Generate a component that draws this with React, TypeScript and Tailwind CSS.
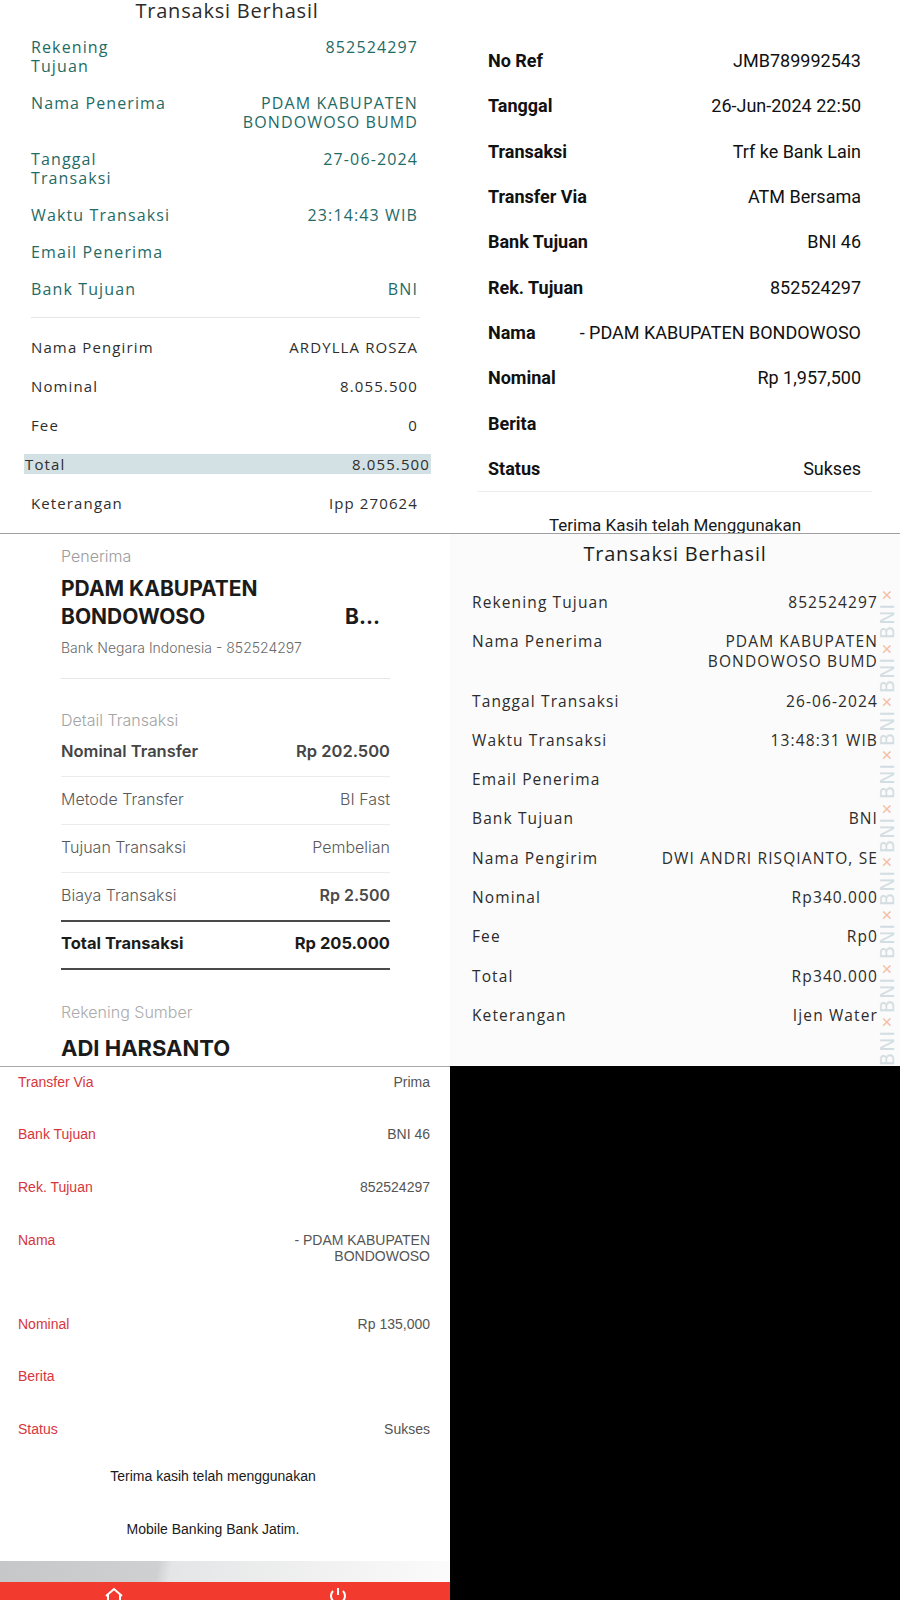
import React from "react";

type Row = { l: React.ReactNode; v?: React.ReactNode };

function Panel1() {
  const top: Row[] = [
    { l: <>Rekening<br />Tujuan</>, v: "852524297" },
    { l: "Nama Penerima", v: <>PDAM KABUPATEN<br />BONDOWOSO BUMD</> },
    { l: <>Tanggal<br />Transaksi</>, v: "27-06-2024" },
    { l: "Waktu Transaksi", v: "23:14:43 WIB" },
    { l: "Email Penerima", v: "" },
    { l: "Bank Tujuan", v: "BNI" },
  ];
  return (
    <div className="w-[450px] h-[533px] bg-white overflow-hidden font-['Open_Sans',sans-serif] tracking-[0.07em]">
      <div className="h-[20px] leading-[22px] text-[20px] text-center text-[#2b2b2b] tracking-[0.04em] pl-[4px]">Transaksi Berhasil</div>
      <div className="mt-[18px] px-[31px] pr-[32px] flex flex-col gap-[18px] text-[16px] leading-[19px] font-medium text-[#1f6b66]">
        {top.map((r, i) => (
          <div key={i} className="flex justify-between">
            <div>{r.l}</div>
            <div className="text-right">{r.v}</div>
          </div>
        ))}
      </div>
      <div className="mx-[31px] mr-[30px] mt-[18px] h-px bg-[#e2e6e7]" />
      <div className="mt-[20px] px-[31px] pr-[32px] flex flex-col gap-[20px] text-[15px] leading-[19px] text-[#2e2e2e]">
        <div className="flex justify-between"><span>Nama Pengirim</span><span>ARDYLLA ROSZA</span></div>
        <div className="flex justify-between"><span>Nominal</span><span>8.055.500</span></div>
        <div className="flex justify-between"><span>Fee</span><span>0</span></div>
      </div>
      <div className="mt-[19px] ml-[24px] w-[407px] h-[20px] bg-[#d3e0e4] flex justify-between items-center px-[1px] text-[15px] text-[#2e2e2e]">
        <span>Total</span><span>8.055.500</span>
      </div>
      <div className="mt-[20px] px-[31px] pr-[32px] flex justify-between text-[15px] leading-[19px] text-[#2e2e2e]">
        <span>Keterangan</span><span>Ipp 270624</span>
      </div>
    </div>
  );
}

function Panel2() {
  const rows: [string, string][] = [
    ["No Ref", "JMB789992543"],
    ["Tanggal", "26-Jun-2024 22:50"],
    ["Transaksi", "Trf ke Bank Lain"],
    ["Transfer Via", "ATM Bersama"],
    ["Bank Tujuan", "BNI 46"],
    ["Rek. Tujuan", "852524297"],
    ["Nama", "- PDAM KABUPATEN BONDOWOSO"],
    ["Nominal", "Rp 1,957,500"],
    ["Berita", ""],
    ["Status", "Sukses"],
  ];
  return (
    <div className="w-[450px] h-[533px] bg-white overflow-hidden font-['Roboto',sans-serif] text-[#111]">
      <div className="pt-[38px] pl-[38px] pr-[39px]">
        {rows.map(([l, v]) => (
          <div key={l} className="h-[45.3px] flex items-center justify-between text-[18px]">
            <span className="font-bold">{l}</span>
            <span>{v}</span>
          </div>
        ))}
      </div>
      <div className="ml-[28px] w-[394px] h-px bg-[#ececec]" />
      <div className="mt-[23px] text-center text-[17px] leading-[20px] text-[#1a1a1a]">Terima Kasih telah Menggunakan</div>
    </div>
  );
}

function Panel3() {
  const rows: { l: string; v: string }[] = [
    { l: "Metode Transfer", v: "BI Fast" },
    { l: "Tujuan Transaksi", v: "Pembelian" },
  ];
  return (
    <div className="w-[450px] h-[532px] bg-white overflow-hidden font-['Inter',sans-serif] pl-[61px] pr-[60px]">
      <div className="mt-[12px] text-[16px] leading-[20px] text-[#9c9c9c] font-light">Penerima</div>
      <div className="mt-[9px] text-[21px] leading-[28px] font-bold text-[#1b1b1b] pr-[10px]">
        <div>PDAM KABUPATEN</div>
        <div className="flex justify-between"><span>BONDOWOSO</span><span>B...</span></div>
      </div>
      <div className="mt-[7px] text-[14px] leading-[20px] text-[#6a6a6a] font-light">Bank Negara Indonesia - 852524297</div>
      <div className="mt-[20px] h-px bg-[#e6e6e6]" />
      <div className="mt-[31px] text-[16px] leading-[20px] text-[#a3a3a3] font-light">Detail Transaksi</div>
      <div className="pt-[11px] pb-[15px] leading-[20px] flex justify-between text-[16.5px] font-semibold text-[#454545] border-b border-[#ececec]">
        <span>Nominal Transfer</span><span>Rp 202.500</span>
      </div>
      {rows.map((r) => (
        <div key={r.l} className="pt-[12px] pb-[15px] leading-[20px] flex justify-between text-[16px] text-[#5a5a5a] font-light border-b border-[#ececec]">
          <span>{r.l}</span><span>{r.v}</span>
        </div>
      ))}
      <div className="pt-[12px] pb-[15px] leading-[20px] flex justify-between text-[16px] text-[#5a5a5a] font-light border-b-2 border-[#4a4a4a]">
        <span>Biaya Transaksi</span><span className="font-semibold text-[#4a4a4a]">Rp 2.500</span>
      </div>
      <div className="pt-[11px] pb-[15px] leading-[20px] flex justify-between text-[16.5px] font-bold text-[#1b1b1b] border-b-2 border-[#4a4a4a]">
        <span>Total Transaksi</span><span>Rp 205.000</span>
      </div>
      <div className="mt-[32px] text-[16px] leading-[20px] text-[#ababab] font-light">Rekening Sumber</div>
      <div className="mt-[12px] text-[22px] leading-[28px] font-bold text-[#1b1b1b]">ADI HARSANTO</div>
    </div>
  );
}

function Watermark() {
  const items = Array.from({ length: 9 });
  return (
    <div className="absolute right-[3px] top-0 bottom-0 w-[20px] overflow-hidden flex justify-center">
      <div className="[writing-mode:vertical-rl] rotate-180 text-[19px] leading-[20px] font-['DejaVu_Sans',sans-serif] whitespace-nowrap text-[#d3dee3] -mt-[10px]">
        {items.map((_, i) => (
          <span key={i}>
            BNI<span className="text-[#f5bfa4] text-[14px]">✕</span>
          </span>
        ))}
      </div>
    </div>
  );
}

function Panel4() {
  const rows: Row[] = [
    { l: "Rekening Tujuan", v: "852524297" },
    { l: "Nama Penerima", v: <>PDAM KABUPATEN<br />BONDOWOSO BUMD</> },
    { l: "Tanggal Transaksi", v: "26-06-2024" },
    { l: "Waktu Transaksi", v: "13:48:31 WIB" },
    { l: "Email Penerima", v: "" },
    { l: "Bank Tujuan", v: "BNI" },
    { l: "Nama Pengirim", v: "DWI ANDRI RISQIANTO, SE" },
    { l: "Nominal", v: "Rp340.000" },
    { l: "Fee", v: "Rp0" },
    { l: "Total", v: "Rp340.000" },
    { l: "Keterangan", v: "Ijen Water" },
  ];
  return (
    <div className="relative w-[450px] h-[532px] bg-[#fbfbfb] overflow-hidden font-['Open_Sans',sans-serif] tracking-[0.07em] text-[#2c2c2c]">
      <div className="mt-[8px] h-[24px] leading-[24px] text-[20px] text-center text-[#1e1e1e] tracking-[0.04em]">Transaksi Berhasil</div>
      <div className="mt-[26px] pl-[22px] pr-[22px] flex flex-col gap-[19.3px] text-[15.5px] leading-[20px]">
        {rows.map((r, i) => (
          <div key={i} className="flex justify-between">
            <div>{r.l}</div>
            <div className="text-right">{r.v}</div>
          </div>
        ))}
      </div>
      <Watermark />
    </div>
  );
}

function Panel5() {
  const rows: { l: string; v: React.ReactNode; h: string }[] = [
    { l: "Transfer Via", v: "Prima", h: "h-[52px]" },
    { l: "Bank Tujuan", v: "BNI 46", h: "h-[53px]" },
    { l: "Rek. Tujuan", v: "852524297", h: "h-[53px]" },
    { l: "Nama", v: <>- PDAM KABUPATEN<br />BONDOWOSO</>, h: "h-[84px]" },
    { l: "Nominal", v: "Rp 135,000", h: "h-[52px]" },
    { l: "Berita", v: "", h: "h-[53px]" },
    { l: "Status", v: "Sukses", h: "h-[47px]" },
  ];
  return (
    <div className="w-[450px] h-[534px] bg-white overflow-hidden border-t border-[#a8a8a8] font-['Liberation_Sans',Arial,sans-serif] flex flex-col">
      <div className="pt-[7px] pl-[18px] pr-[20px] text-[14px] leading-[16px]">
        {rows.map((r) => (
          <div key={r.l} className={`${r.h} flex justify-between`}>
            <span className="text-[#d7363c]">{r.l}</span>
            <span className="text-right text-[#555]">{r.v}</span>
          </div>
        ))}
        <div className="h-[53px] text-center text-[#1a1a1a] pr-[22px]">Terima kasih telah menggunakan</div>
        <div className="h-[16px] text-center text-[#1a1a1a] pr-[22px]">Mobile Banking Bank Jatim.</div>
      </div>
      <div className="mt-[24px] h-[21px] bg-[linear-gradient(100deg,#c6c7c9_0%,#cfd0d2_35%,#e4e5e6_38%,#f4f4f4_80%,#fbfbfb_100%)]" />
      <div className="flex-1 bg-[#f23a2f] relative overflow-hidden">
        <svg className="absolute left-[104px] top-[4px]" width="20" height="20" viewBox="0 0 20 20" fill="none" stroke="white" strokeWidth="2">
          <path d="M2 10 L10 3 L18 10 M4 9 V18 H16 V9" />
        </svg>
        <svg className="absolute left-[328px] top-[4px]" width="20" height="20" viewBox="0 0 20 20" fill="none" stroke="white" strokeWidth="2">
          <path d="M10 2 V9 M5 5 A7 7 0 1 0 15 5" />
        </svg>
      </div>
    </div>
  );
}

export default function App() {
  return (
    <div className="w-[900px] h-[1600px] bg-black flex flex-col overflow-hidden">
      <div className="flex h-[533px]">
        <Panel1 />
        <Panel2 />
      </div>
      <div className="h-px bg-[#a0a0a0]" />
      <div className="flex h-[532px]">
        <Panel3 />
        <Panel4 />
      </div>
      <div className="flex h-[534px]">
        <Panel5 />
        <div className="flex-1 bg-black" />
      </div>
    </div>
  );
}
